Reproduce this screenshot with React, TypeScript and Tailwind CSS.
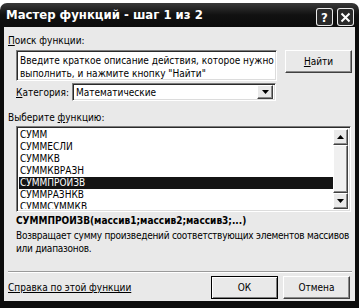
const raised =
  'border border-t-white border-l-white border-b-[#404040] border-r-[#404040] shadow-[inset_-1px_-1px_0_#8a8a8a] bg-[#e9e9e9]'
const sunken =
  'border border-t-[#7d7d7d] border-l-[#7d7d7d] border-b-white border-r-white shadow-[inset_1px_1px_0_#2a2a2a,inset_-1px_-1px_0_#dcdcdc]'

const functions = ['СУММ', 'СУММЕСЛИ', 'СУММКВ', 'СУММКВРАЗН', 'СУММПРОИЗВ', 'СУММРАЗНКВ', 'СУММСУММКВ']

function Arrow({ up }: { up?: boolean }) {
  return (
    <svg width="7" height="4" viewBox="0 0 7 4">
      {up ? <path d="M0 4h7L3.5 0z" fill="#000" /> : <path d="M0 0h7L3.5 4z" fill="#000" />}
    </svg>
  )
}

function TitleBar() {
  return (
    <div className="mt-[3px] h-[24px] shrink-0 rounded-t-[7px] bg-gradient-to-b from-[#3a3a3a] via-[#111] to-[#0c0c0c] flex items-start pl-[6px] pr-[5px]">
      <span className="mt-[4px] text-[13px] font-bold text-white leading-[16px] font-['Liberation_Sans_Narrow','DejaVu_Sans_Condensed',sans-serif]">
        Мастер функций - шаг 1 из 2
      </span>
      <div className="ml-auto mt-[5px] flex gap-[4px]">
        <div className="w-[17px] h-[18px] rounded-[3px] border border-white/90 bg-[#2a2a2a] flex items-center justify-center text-white text-[13px] font-bold leading-none">
          ?
        </div>
        <div className="w-[17px] h-[18px] rounded-[3px] border border-white/90 bg-[#2a2a2a] flex items-center justify-center">
          <svg width="11" height="11" viewBox="0 0 11 11">
            <path d="M1.5 1.5l8 8M9.5 1.5l-8 8" stroke="#fff" strokeWidth="2" />
          </svg>
        </div>
      </div>
    </div>
  )
}

export default function App() {
  return (
    <div className="w-[359px] h-[308px] overflow-hidden bg-white flex flex-col text-[10px] leading-[13px] text-black font-['DejaVu_Sans_Condensed','DejaVu_Sans',sans-serif]">
      <TitleBar />
      <div className="flex-1 min-h-0 flex flex-col bg-[#e9e9e9] border-l-4 border-r-4 border-b-[7px] border-[#0c0c0c] pl-[4px]">
        <div className="mt-[7px] h-[13px] shrink-0">
          <span className="underline">П</span>оиск функции:
        </div>

        <div className="mt-[3px] flex items-start shrink-0">
          <div className={`ml-[8px] w-[261px] h-[31px] bg-white pl-[3px] pt-[3px] whitespace-nowrap overflow-hidden ${sunken}`}>
            <div>Введите краткое описание действия, которое нужно</div>
            <div>выполнить, и нажмите кнопку "Найти"</div>
          </div>
          <div className={`ml-[8px] w-[67px] h-[23px] flex items-center justify-center ${raised}`}>
            <span>
              <span className="underline">Н</span>айти
            </span>
          </div>
        </div>

        <div className="mt-[2px] flex items-center shrink-0">
          <div className="ml-[8px] w-[56px]">
            <span className="underline">К</span>атегория:
          </div>
          <div className={`w-[204px] h-[18px] bg-white flex items-center pl-[3px] pr-[2px] ${sunken}`}>
            <span>Математические</span>
            <div className={`ml-auto w-[16px] h-[14px] flex items-center justify-center ${raised}`}>
              <Arrow />
            </div>
          </div>
        </div>

        <div className="mt-[10px] h-[13px] shrink-0">
          Выберите <span className="underline">ф</span>ункцию:
        </div>

        <div className={`mt-[2px] ml-[8px] w-[335px] h-[86px] shrink-0 bg-white flex p-[2px] ${sunken}`}>
          <div className="flex-1 overflow-hidden">
            {functions.map((f) => (
              <div
                key={f}
                className={`h-[12px] leading-[12px] pl-[1px] ${
                  f === 'СУММПРОИЗВ' ? 'bg-[#141414] text-white' : ''
                }`}
              >
                {f}
              </div>
            ))}
          </div>
          <div className="w-[15px] flex flex-col bg-[#f2f2f2]">
            <div className={`h-[16px] flex items-center justify-center ${raised}`}>
              <Arrow up />
            </div>
            <div className={`h-[48px] ${raised} bg-[#f0f0f0]`} />
            <div className="flex-1" />
            <div className={`h-[16px] flex items-center justify-center ${raised}`}>
              <Arrow />
            </div>
          </div>
        </div>

        <div className="mt-[2px] ml-[8px] h-[13px] shrink-0 font-bold whitespace-nowrap">
          СУММПРОИЗВ(массив1;массив2;массив3;...)
        </div>
        <div className="mt-[2px] ml-[8px] shrink-0 whitespace-nowrap tracking-[-0.25px]">
          <div>Возвращает сумму произведений соответствующих элементов массивов</div>
          <div>или диапазонов.</div>
        </div>

        <div className="mt-[16px] mr-[3px] h-[2px] shrink-0 border-t border-t-[#9a9a9a] border-b border-b-white" />

        <div className="mt-[3px] flex items-center h-[23px] shrink-0">
          <span className="underline">Справка по этой функции</span>
          <div className="ml-auto flex gap-[5px] mr-[5px]">
            <div className="w-[67px] h-[23px] border border-black flex items-center justify-center bg-[#e9e9e9] shadow-[inset_1px_1px_0_#fff,inset_-1px_-1px_0_#7d7d7d]">
              ОК
            </div>
            <div className={`w-[67px] h-[23px] flex items-center justify-center ${raised}`}>Отмена</div>
          </div>
        </div>
      </div>
    </div>
  )
}
